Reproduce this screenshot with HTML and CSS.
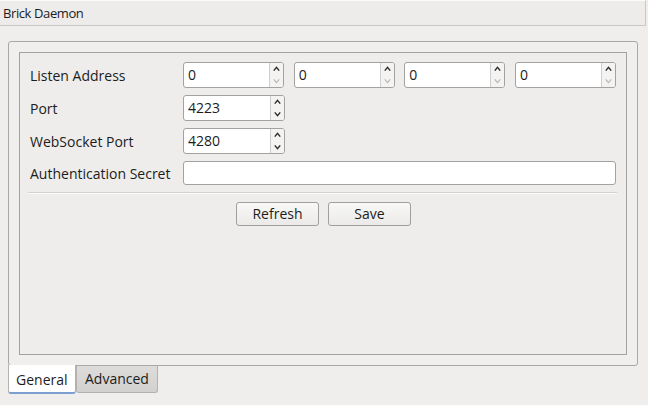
FILE: index.html
```html
<!DOCTYPE html>
<html>
<head>
<meta charset="utf-8">
<link rel="stylesheet" href="styles.css">
</head>
<body>
<div class="header">Brick Daemon</div>
<div class="tabwidget">
  <div class="pane">
    <div class="frame">
      <div class="form">
        <div class="label">Listen Address</div>
        <div class="ips">
          <div class="spin"><span class="val">0</span><span class="btns"><svg class="up" viewBox="0 0 11 11"><polyline points="3,7 5.5,4 8,7"/></svg><svg class="dn dis" viewBox="0 0 11 11"><polyline points="3,4 5.5,7 8,4"/></svg></span></div>
          <div class="spin"><span class="val">0</span><span class="btns"><svg class="up" viewBox="0 0 11 11"><polyline points="3,7 5.5,4 8,7"/></svg><svg class="dn dis" viewBox="0 0 11 11"><polyline points="3,4 5.5,7 8,4"/></svg></span></div>
          <div class="spin"><span class="val">0</span><span class="btns"><svg class="up" viewBox="0 0 11 11"><polyline points="3,7 5.5,4 8,7"/></svg><svg class="dn dis" viewBox="0 0 11 11"><polyline points="3,4 5.5,7 8,4"/></svg></span></div>
          <div class="spin"><span class="val">0</span><span class="btns"><svg class="up" viewBox="0 0 11 11"><polyline points="3,7 5.5,4 8,7"/></svg><svg class="dn dis" viewBox="0 0 11 11"><polyline points="3,4 5.5,7 8,4"/></svg></span></div>
        </div>
        <div class="label">Port</div>
        <div class="row"><div class="spin"><span class="val">4223</span><span class="btns"><svg class="up" viewBox="0 0 11 11"><polyline points="3,7 5.5,4 8,7"/></svg><svg class="dn" viewBox="0 0 11 11"><polyline points="3,4 5.5,7 8,4"/></svg></span></div></div>
        <div class="label">WebSocket Port</div>
        <div class="row"><div class="spin"><span class="val">4280</span><span class="btns"><svg class="up" viewBox="0 0 11 11"><polyline points="3,7 5.5,4 8,7"/></svg><svg class="dn" viewBox="0 0 11 11"><polyline points="3,4 5.5,7 8,4"/></svg></span></div></div>
        <div class="label">Authentication Secret</div>
        <div class="row"><div class="input"></div></div>
      </div>
      <div class="sep"></div>
      <div class="buttons">
        <div class="btn">Refresh</div>
        <div class="btn">Save</div>
      </div>
    </div>
  </div>
  <div class="tabs">
    <div class="tab active">General</div>
    <div class="tab">Advanced</div>
  </div>
</div>
</body>
</html>
```
FILE: styles.css
```css
html, body {
  margin: 0;
  padding: 0;
}
body {
  width: 648px;
  height: 405px;
  background: #efeeec;
  font-family: "Open Sans", "Lato", sans-serif;
  font-size: 14px;
  color: #1c1c1c;
  overflow: hidden;
}
.header {
  width: 642px;
  height: 24px;
  padding-left: 3px;
  border-top: 1px solid #fbfbfa;
  border-bottom: 1px solid #c9c8c6;
  border-right: 1px solid #c9c8c6;
  background: #edeceb;
  line-height: 24px;
  font-size: 13px;
  letter-spacing: -0.4px;
}
.tabwidget {
  margin: 15px 0 0 8px;
  width: 630px;
}
.pane {
  box-sizing: border-box;
  height: 325px;
  border: 1px solid #a9a8a6;
  border-radius: 3px;
  background: #f0efee;
  padding: 10px;
  display: flex;
}
.frame {
  flex: 1;
  border: 1px solid #a3a2a0;
  background: #eeedeb;
  padding: 9px 9px 0 10px;
}
.form {
  display: grid;
  grid-template-columns: 153px 1fr;
  row-gap: 7px;
  align-items: center;
}
.ips {
  display: flex;
  justify-content: space-between;
  width: 433px;
}
.ips .spin {
  width: 101px;
}
.spin {
  box-sizing: border-box;
  width: 102px;
  height: 26px;
  border: 1px solid #a3a2a0;
  border-radius: 3px;
  background: #ffffff;
  display: flex;
  align-items: stretch;
}
.val {
  flex: 1;
  padding-left: 4px;
  line-height: 24px;
}
.btns {
  width: 13px;
  border-left: 1px solid #cfcecc;
  background: #f4f3f2;
  display: flex;
  flex-direction: column;
  border-radius: 0 2px 2px 0;
}
.btns svg {
  width: 13px;
  height: 12px;
  fill: none;
  stroke: #2a2a2a;
  stroke-width: 1.3;
}
.btns svg.dis {
  stroke: #b5b4b2;
  stroke-width: 1;
}
.input {
  box-sizing: border-box;
  height: 24px;
  width: 433px;
  border: 1px solid #a3a2a0;
  border-radius: 3px;
  background: #ffffff;
}
.sep {
  height: 1px;
  background: #d3d2d0;
  border-bottom: 1px solid #fafaf9;
  margin: 7px 0 0 -2px;
}
.buttons {
  display: flex;
  justify-content: center;
  gap: 9px;
  margin-top: 8px;
}
.btn {
  box-sizing: border-box;
  width: 83px;
  height: 24px;
  border: 1px solid #a09f9d;
  border-radius: 3px;
  background: linear-gradient(#f8f8f7, #ebeae8);
  text-align: center;
  line-height: 22px;
}
.tabs {
  display: flex;
  align-items: flex-start;
}
.tab {
  box-sizing: border-box;
  height: 27px;
  padding: 0 8px;
  line-height: 26px;
  border: 1px solid #b3b2b0;
  border-top: none;
  border-radius: 0 0 3px 3px;
  background: linear-gradient(#dddcda, #d2d1cf);
}
.tab.active {
  height: 29px;
  width: 68px;
  padding: 3px 0 0 7px;
  background: #ffffff;
  border-color: #b3b2b0;
  border-bottom: 2px solid #7a9fd0;
  margin-top: -1px;
  line-height: 24px;
}
```
